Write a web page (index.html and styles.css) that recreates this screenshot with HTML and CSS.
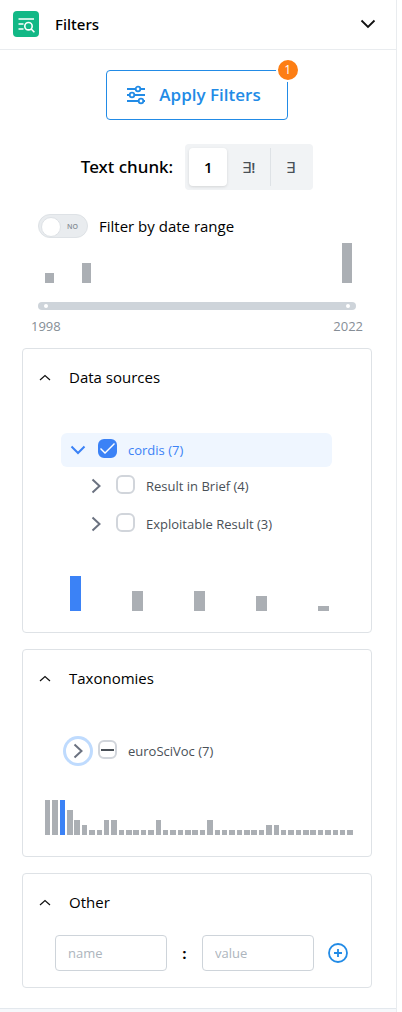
FILE: index.html
```html
<!DOCTYPE html>
<html lang="en">
<head>
<meta charset="utf-8">
<meta name="viewport" content="width=device-width, initial-scale=1">
<title>Filters</title>
<link rel="stylesheet" href="styles.css">
</head>
<body>
<section class="panel">
  <header class="panel-head">
    <svg class="logo" viewBox="0 0 26 26" aria-hidden="true">
      <rect width="26" height="26" rx="4" fill="#12b886"/>
      <g fill="none" stroke="#fff" stroke-width="1.6"><path d="M5.500 8h15.500M5.500 13h5M5.500 18h5"/><circle cx="15.500" cy="15.200" r="3.700"/><path d="M18.200 18l3.200 3.200"/></g>
    </svg>
    <h1 class="panel-title">Filters</h1>
    <button class="icon-btn" type="button" aria-label="Collapse filters">
      <svg width="16" height="10" viewBox="0 0 16 10"><path d="M1.500 1.500L8 8l6.500-6.500" fill="none" stroke="#111" stroke-width="1.800"/></svg>
    </button>
  </header>

  <div class="panel-body">
    <div class="apply">
      <button class="apply-btn" type="button">
        <svg width="20" height="20" viewBox="0 0 20 20" fill="none" stroke="currentColor" stroke-width="1.800">
          <path d="M1 4h8.500M14.500 4H19M1 10h2.500M8.500 10H19M1 16h11.500M17.500 16H19"/>
          <circle cx="12" cy="4" r="2.300"/><circle cx="6" cy="10" r="2.300"/><circle cx="15" cy="16" r="2.300"/>
        </svg>
        Apply Filters
      </button>
      <span class="badge">1</span>
    </div>

    <div class="chunk" role="radiogroup" aria-labelledby="chunk-label">
      <span class="chunk-label" id="chunk-label">Text chunk:</span>
      <div class="segments">
        <input class="seg-input" type="radio" name="chunk" id="c1" checked><label class="seg" for="c1">1</label>
        <input class="seg-input" type="radio" name="chunk" id="c2"><label class="seg seg-wide" for="c2"><span class="sign">∃</span>!</label>
        <input class="seg-input" type="radio" name="chunk" id="c3"><label class="seg seg-split" for="c3"><span class="sign">∃</span></label>
      </div>
    </div>

    <div class="dates">
      <label class="switch-row" for="by-date">
        <span class="switch"><input class="switch-input" type="checkbox" role="switch" id="by-date"><span class="switch-text" aria-hidden="true">NO</span></span>
        Filter by date range
      </label>
      <div class="chart chart-dates" data-values="2,,,4,,,,,,,,,,,,,,,,,,,,,8"></div>
      <div class="range">
        <input class="range-input" type="range" min="1998" max="2022" value="1998" aria-label="From year">
        <input class="range-input" type="range" min="1998" max="2022" value="2022" aria-label="To year">
      </div>
      <div class="years"><span>1998</span><span>2022</span></div>
    </div>

    <section class="card">
      <button class="card-head" type="button">
        <svg width="12" height="7" viewBox="0 0 12 7"><path d="M1 6l5-4.500L11 6" fill="none" stroke="#111" stroke-width="1.200"/></svg>
        Data sources
      </button>
      <ul class="tree">
        <li>
          <div class="node node-on">
            <button class="toggle" type="button" aria-label="Collapse cordis"><svg width="16" height="16" viewBox="0 0 16 16"><path d="M1.500 4.500L8 11l6.500-6.500"/></svg></button>
            <input class="tick" type="checkbox" id="n1" checked><label for="n1">cordis (7)</label>
          </div>
          <ul class="subtree">
            <li class="node">
              <button class="toggle" type="button" aria-label="Expand Result in Brief"><svg width="16" height="16" viewBox="0 0 16 16"><path d="M4.500 1.500L11.500 8l-7 6.500"/></svg></button>
              <input class="tick" type="checkbox" id="n2"><label for="n2">Result in Brief (4)</label>
            </li>
            <li class="node">
              <button class="toggle" type="button" aria-label="Expand Exploitable Result"><svg width="16" height="16" viewBox="0 0 16 16"><path d="M4.500 1.500L11.500 8l-7 6.500"/></svg></button>
              <input class="tick" type="checkbox" id="n3"><label for="n3">Exploitable Result (3)</label>
            </li>
          </ul>
        </li>
      </ul>
      <div class="chart chart-thin" data-values="7,4,4,3,1" data-active="0"></div>
    </section>

    <section class="card">
      <button class="card-head" type="button">
        <svg width="12" height="7" viewBox="0 0 12 7"><path d="M1 6l5-4.500L11 6" fill="none" stroke="#111" stroke-width="1.200"/></svg>
        Taxonomies
      </button>
      <ul class="tree">
        <li class="node">
          <button class="toggle toggle-focus" type="button" aria-label="Expand euroSciVoc"><svg width="16" height="16" viewBox="0 0 16 16"><path d="M4.500 1.500L11.500 8l-7 6.500"/></svg></button>
          <input class="tick tick-part" type="checkbox" id="n4" aria-checked="mixed"><label for="n4">euroSciVoc (7)</label>
        </li>
      </ul>
      <div class="chart" data-values="7,7,7,5,3,2,1,1,3,3,1,1,1,1,1,3,1,1,1,1,1,1,3,1,1,1,1,1,1,1,2,2,1,1,1,1,1,1,1,1,1,1" data-active="2"></div>
    </section>

    <section class="card">
      <button class="card-head" type="button">
        <svg width="12" height="7" viewBox="0 0 12 7"><path d="M1 6l5-4.500L11 6" fill="none" stroke="#111" stroke-width="1.200"/></svg>
        Other
      </button>
      <div class="pair">
        <input class="field" type="text" placeholder="name" aria-label="name">
        <span class="colon">:</span>
        <input class="field" type="text" placeholder="value" aria-label="value">
        <button class="icon-btn" type="button" aria-label="Add">
          <svg width="20" height="20" viewBox="0 0 20 20" fill="none" stroke="#228be6" stroke-width="1.800"><circle cx="10" cy="10" r="9"/><path d="M10 6v8M6 10h8"/></svg>
        </button>
      </div>
    </section>
  </div>
</section>
<script src="charts.js"></script>
</body>
</html>
```
FILE: styles.css
```css
* { box-sizing: border-box; }
body {
  margin: 0;
  background: #fff;
  color: #000;
  font: 15px/24px "Segoe UI", "Open Sans", "Noto Sans", sans-serif;
}
button { font: inherit; color: inherit; background: none; border: 0; padding: 0; cursor: pointer; }
svg { display: block; flex: none; }
ul { list-style: none; margin: 0; padding: 0; }

.panel { margin-right: 5px; border-right: 1px solid #e9ecef; }
.panel::after { content: ""; display: block; height: 4px; border-top: 1px solid #e3e8ed; background: #f6f8fb; }
.panel-head { display: flex; align-items: center; gap: 16px; height: 50px; padding: 0 20px 2px 13px; border-bottom: 1px solid #e9ecef; }
.logo { width: 26px; height: 26px; }
.panel-title { flex: 1; margin: 0; font-family: "Segoe UI", "Noto Sans", sans-serif; font-size: 15px; font-weight: 500; line-height: 22px; }
.panel-body { display: flex; flex-direction: column; padding: 20px 24px 20px 22px; }

.apply { position: relative; align-self: center; }
.apply-btn {
  display: flex; align-items: center; justify-content: center; gap: 13px;
  height: 50px; padding: 0 26px 0 19px;
  border: 1px solid #228be6; border-radius: 4px;
  color: #228be6; font-size: 17px; font-weight: 600;
}
.badge {
  position: absolute; top: -12px; right: -12px;
  width: 24px; height: 24px; border: 2px solid #fff; border-radius: 50%;
  background: #fd7e14; color: #fff; font-size: 12px; line-height: 20px; text-align: center;
}

.chunk { display: flex; justify-content: center; align-items: center; gap: 12px; margin-top: 24px; }
.chunk-label { font-family: "Segoe UI", "Noto Sans", sans-serif; font-size: 17px; font-weight: 500; }
.segments { position: relative; display: flex; padding: 4px; border-radius: 4px; background: #f1f3f5; }
.seg-input { position: absolute; opacity: 0; pointer-events: none; }
.seg { width: 38px; height: 38px; border-radius: 4px; color: #495057; font-size: 15px; font-weight: 600; line-height: 38px; text-align: center; }
.seg-wide { width: 43px; }
.seg-split { width: 39px; border-left: 1px solid #dee2e6; border-radius: 0; }
.seg-input:checked + .seg { background: #fff; color: #000; box-shadow: 0 1px 3px rgba(0, 0, 0, .12); }
.sign { font-weight: 400; }

.dates { margin-bottom: 10px; }
.switch-row { display: flex; align-items: center; gap: 11px; margin: 24px 0 5px 16px; }
.switch { position: relative; display: flex; }
.switch-input { appearance: none; width: 50px; height: 24px; margin: 0; padding: 2px; border: 1px solid #dee2e6; border-radius: 12px; background: #e9ecef; }
.switch-input::before { content: ""; display: block; width: 18px; height: 18px; border: 1px solid #dee2e6; border-radius: 50%; background: #fff; }
.switch-text { position: absolute; right: 10px; top: 1px; color: #868e96; font-size: 7px; font-weight: 600; pointer-events: none; }

.range { position: relative; height: 8px; margin: 19px 16px 0; border-radius: 4px; background: #ced4da; }
.range-input { appearance: none; position: absolute; inset: 0 6px; width: calc(100% - 12px); height: 8px; margin: 0; background: none; pointer-events: none; }
.range-input::-webkit-slider-thumb { appearance: none; width: 4px; height: 4px; border-radius: 50%; background: #fff; pointer-events: auto; }
.years { display: flex; justify-content: space-between; margin: 4px 9px 0; color: #868e96; font-size: 13px; }

.chart { display: flex; align-items: flex-end; height: 35px; margin: 0 17px 21px 21px; }
.chart-dates { height: 40px; margin: 0 19px 0 21px; }
.slot { flex: 1; display: flex; justify-content: center; }
.bar { width: 75%; background: #abafb4; }
.chart-thin .bar { width: 11px; }
.bar-active { background: #3b82f6; }

.card { margin-bottom: 16px; border: 1px solid #dee2e6; border-radius: 4px; }
.card:last-child { margin-bottom: 0; }
.card-head { display: flex; align-items: center; gap: 18px; width: 100%; height: 56px; padding: 0 16px; text-align: left; }

.tree { margin: 28px 39px 32px 38px; color: #495057; font-size: 13px; }
.tree + .chart-thin { margin-top: 35px; }
.node { display: flex; align-items: center; height: 34px; padding-left: 2px; border-radius: 6px; }
.node-on { background: #eff6ff; color: #3b82f6; }
.subtree { display: grid; gap: 4px; margin-top: 2px; padding-left: 18px; }
.toggle { display: grid; place-items: center; width: 30px; height: 30px; border-radius: 50%; color: #6b7280; }
.toggle path { fill: none; stroke: currentColor; stroke-width: 2; }
.node-on .toggle { color: #3b82f6; }
.toggle-focus { box-shadow: inset 0 0 0 3px #bfdbfe; }
.tick { appearance: none; display: grid; place-items: center; width: 19px; height: 19px; margin: 0 11px 3px 5px; border: 2px solid #d1d5db; border-radius: 6px; background: #fff; }
.tick:checked { border-color: #3b82f6; background: #3b82f6; }
.tick:checked::before { content: ""; width: 15px; height: 15px; background: #fff; clip-path: polygon(0 8px, 1px 7px, 5px 11px, 14px 2px, 15px 3px, 5px 13px); }
.tick-part::before { content: ""; width: 13px; height: 2px; background: #495057; }

.pair { display: flex; align-items: center; gap: 14px; padding: 5px 23px 16px 32px; }
.field { flex: 1; min-width: 0; height: 36px; padding: 0 12px; border: 1px solid #ced4da; border-radius: 4px; font: inherit; font-size: 13px; }
.field::placeholder { color: #adb5bd; opacity: 1; }
.colon { width: 7px; font-weight: 700; text-align: center; }
```
FILE: charts.js
```js
// Builds the bar charts: 5px of height for each unit.
document.querySelectorAll('.chart').forEach(function (chart) {
  chart.dataset.values.split(',').forEach(function (value, i) {
    var slot = document.createElement('div');
    var bar = document.createElement('div');
    slot.className = 'slot';
    bar.className = String(i) === chart.dataset.active ? 'bar bar-active' : 'bar';
    bar.style.height = Number(value) * 5 + 'px';
    slot.appendChild(bar);
    chart.appendChild(slot);
  });
});
```
